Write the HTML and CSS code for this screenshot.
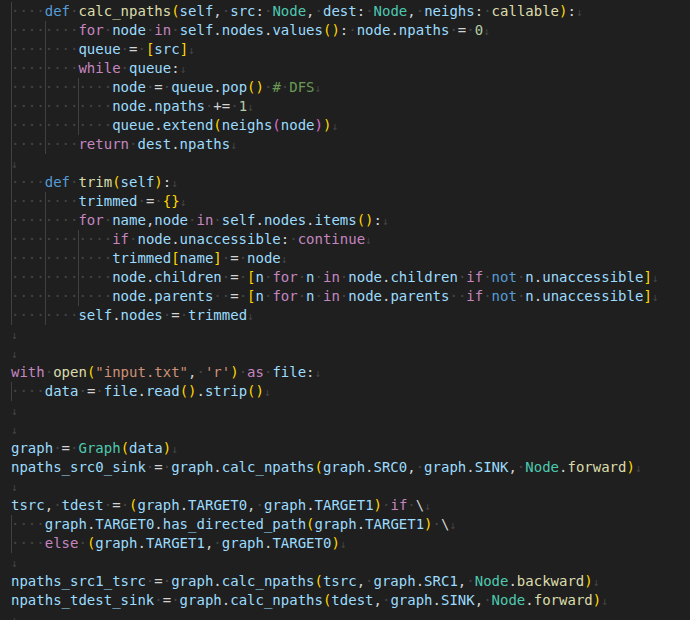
FILE: index.html
```html
<!DOCTYPE html>
<html>
<head>
<meta charset="utf-8">
<link rel="stylesheet" href="styles.css">
</head>
<body>
<div class="editor">
<div class="line"><span class="ind w">····</span><span class="d">def</span><span class="w">·</span><span class="f">calc_npaths</span><span class="b1">(</span><span class="v">self</span>,<span class="w">·</span><span class="v">src</span>:<span class="w">·</span><span class="c">Node</span>,<span class="w">·</span><span class="v">dest</span>:<span class="w">·</span><span class="c">Node</span>,<span class="w">·</span><span class="v">neighs</span>:<span class="w">·</span><span class="f">callable</span><span class="b1">)</span>:<span class="nl">↓</span></div>
<div class="line"><span class="ind w">····</span><span class="ind w">····</span><span class="k">for</span><span class="w">·</span><span class="v">node</span><span class="w">·</span><span class="k">in</span><span class="w">·</span><span class="v">self</span>.<span class="v">nodes</span>.<span class="v">values</span><span class="b1">()</span>:<span class="w">·</span><span class="v">node</span>.<span class="v">npaths</span><span class="w">·</span>=<span class="w">·</span><span class="n">0</span><span class="nl">↓</span></div>
<div class="line"><span class="ind w">····</span><span class="ind w">····</span><span class="v">queue</span><span class="w">·</span>=<span class="w">·</span><span class="b1">[</span><span class="v">src</span><span class="b1">]</span><span class="nl">↓</span></div>
<div class="line"><span class="ind w">····</span><span class="ind w">····</span><span class="k">while</span><span class="w">·</span><span class="v">queue</span>:<span class="nl">↓</span></div>
<div class="line"><span class="ind w">····</span><span class="ind w">····</span><span class="ind w">····</span><span class="v">node</span><span class="w">·</span>=<span class="w">·</span><span class="v">queue</span>.<span class="v">pop</span><span class="b1">()</span><span class="w">·</span><span class="cm">#</span><span class="w">·</span><span class="cm">DFS</span><span class="nl">↓</span></div>
<div class="line"><span class="ind w">····</span><span class="ind w">····</span><span class="ind w">····</span><span class="v">node</span>.<span class="v">npaths</span><span class="w">·</span>+=<span class="w">·</span><span class="n">1</span><span class="nl">↓</span></div>
<div class="line"><span class="ind w">····</span><span class="ind w">····</span><span class="ind w">····</span><span class="v">queue</span>.<span class="v">extend</span><span class="b1">(</span><span class="v">neighs</span><span class="b2">(</span><span class="v">node</span><span class="b2">)</span><span class="b1">)</span><span class="nl">↓</span></div>
<div class="line"><span class="ind w">····</span><span class="ind w">····</span><span class="k">return</span><span class="w">·</span><span class="v">dest</span>.<span class="v">npaths</span><span class="nl">↓</span></div>
<div class="line"><span class="ind e"></span><span class="nl">↓</span></div>
<div class="line"><span class="ind w">····</span><span class="d">def</span><span class="w">·</span><span class="f">trim</span><span class="b1">(</span><span class="v">self</span><span class="b1">)</span>:<span class="nl">↓</span></div>
<div class="line"><span class="ind w">····</span><span class="ind w">····</span><span class="v">trimmed</span><span class="w">·</span>=<span class="w">·</span><span class="b1">{}</span><span class="nl">↓</span></div>
<div class="line"><span class="ind w">····</span><span class="ind w">····</span><span class="k">for</span><span class="w">·</span><span class="v">name</span>,<span class="v">node</span><span class="w">·</span><span class="k">in</span><span class="w">·</span><span class="v">self</span>.<span class="v">nodes</span>.<span class="v">items</span><span class="b1">()</span>:<span class="nl">↓</span></div>
<div class="line"><span class="ind w">····</span><span class="ind w">····</span><span class="ind w">····</span><span class="k">if</span><span class="w">·</span><span class="v">node</span>.<span class="v">unaccessible</span>:<span class="w">·</span><span class="k">continue</span><span class="nl">↓</span></div>
<div class="line"><span class="ind w">····</span><span class="ind w">····</span><span class="ind w">····</span><span class="v">trimmed</span><span class="b1">[</span><span class="v">name</span><span class="b1">]</span><span class="w">·</span>=<span class="w">·</span><span class="v">node</span><span class="nl">↓</span></div>
<div class="line"><span class="ind w">····</span><span class="ind w">····</span><span class="ind w">····</span><span class="v">node</span>.<span class="v">children</span><span class="w">·</span>=<span class="w">·</span><span class="b1">[</span><span class="v">n</span><span class="w">·</span><span class="k">for</span><span class="w">·</span><span class="v">n</span><span class="w">·</span><span class="k">in</span><span class="w">·</span><span class="v">node</span>.<span class="v">children</span><span class="w">·</span><span class="k">if</span><span class="w">·</span><span class="d">not</span><span class="w">·</span><span class="v">n</span>.<span class="v">unaccessible</span><span class="b1">]</span><span class="nl">↓</span></div>
<div class="line"><span class="ind w">····</span><span class="ind w">····</span><span class="ind w">····</span><span class="v">node</span>.<span class="v">parents</span><span class="w">··</span>=<span class="w">·</span><span class="b1">[</span><span class="v">n</span><span class="w">·</span><span class="k">for</span><span class="w">·</span><span class="v">n</span><span class="w">·</span><span class="k">in</span><span class="w">·</span><span class="v">node</span>.<span class="v">parents</span><span class="w">··</span><span class="k">if</span><span class="w">·</span><span class="d">not</span><span class="w">·</span><span class="v">n</span>.<span class="v">unaccessible</span><span class="b1">]</span><span class="nl">↓</span></div>
<div class="line"><span class="ind w">····</span><span class="ind w">····</span><span class="v">self</span>.<span class="v">nodes</span><span class="w">·</span>=<span class="w">·</span><span class="v">trimmed</span><span class="nl">↓</span></div>
<div class="line"><span class="nl">↓</span></div>
<div class="line"><span class="nl">↓</span></div>
<div class="line"><span class="k">with</span><span class="w">·</span><span class="f">open</span><span class="b1">(</span><span class="s">"input.txt"</span>,<span class="w">·</span><span class="s">'r'</span><span class="b1">)</span><span class="w">·</span><span class="k">as</span><span class="w">·</span><span class="v">file</span>:<span class="nl">↓</span></div>
<div class="line"><span class="ind w">····</span><span class="v">data</span><span class="w">·</span>=<span class="w">·</span><span class="v">file</span>.<span class="v">read</span><span class="b1">()</span>.<span class="v">strip</span><span class="b1">()</span><span class="nl">↓</span></div>
<div class="line"><span class="nl">↓</span></div>
<div class="line"><span class="nl">↓</span></div>
<div class="line"><span class="v">graph</span><span class="w">·</span>=<span class="w">·</span><span class="c">Graph</span><span class="b1">(</span><span class="v">data</span><span class="b1">)</span><span class="nl">↓</span></div>
<div class="line"><span class="v">npaths_src0_sink</span><span class="w">·</span>=<span class="w">·</span><span class="v">graph</span>.<span class="v">calc_npaths</span><span class="b1">(</span><span class="v">graph</span>.<span class="v">SRC0</span>,<span class="w">·</span><span class="v">graph</span>.<span class="v">SINK</span>,<span class="w">·</span><span class="c">Node</span>.<span class="f">forward</span><span class="b1">)</span><span class="nl">↓</span></div>
<div class="line"><span class="nl">↓</span></div>
<div class="line"><span class="v">tsrc</span>,<span class="w">·</span><span class="v">tdest</span><span class="w">·</span>=<span class="w">·</span><span class="b1">(</span><span class="v">graph</span>.<span class="v">TARGET0</span>,<span class="w">·</span><span class="v">graph</span>.<span class="v">TARGET1</span><span class="b1">)</span><span class="w">·</span><span class="k">if</span><span class="w">·</span>\<span class="nl">↓</span></div>
<div class="line"><span class="ind w">····</span><span class="v">graph</span>.<span class="v">TARGET0</span>.<span class="v">has_directed_path</span><span class="b1">(</span><span class="v">graph</span>.<span class="v">TARGET1</span><span class="b1">)</span><span class="w">·</span>\<span class="nl">↓</span></div>
<div class="line"><span class="ind w">····</span><span class="k">else</span><span class="w">·</span><span class="b1">(</span><span class="v">graph</span>.<span class="v">TARGET1</span>,<span class="w">·</span><span class="v">graph</span>.<span class="v">TARGET0</span><span class="b1">)</span><span class="nl">↓</span></div>
<div class="line"><span class="nl">↓</span></div>
<div class="line"><span class="v">npaths_src1_tsrc</span><span class="w">·</span>=<span class="w">·</span><span class="v">graph</span>.<span class="v">calc_npaths</span><span class="b1">(</span><span class="v">tsrc</span>,<span class="w">·</span><span class="v">graph</span>.<span class="v">SRC1</span>,<span class="w">·</span><span class="c">Node</span>.<span class="f">backward</span><span class="b1">)</span><span class="nl">↓</span></div>
<div class="line"><span class="v">npaths_tdest_sink</span><span class="w">·</span>=<span class="w">·</span><span class="v">graph</span>.<span class="v">calc_npaths</span><span class="b1">(</span><span class="v">tdest</span>,<span class="w">·</span><span class="v">graph</span>.<span class="v">SINK</span>,<span class="w">·</span><span class="c">Node</span>.<span class="f">forward</span><span class="b1">)</span><span class="nl">↓</span></div>
<div class="line"><span class="nl">↓</span></div>
</div>
</body>
</html>
```
FILE: styles.css
```css
html, body {
  margin: 0;
  padding: 0;
  background: #1f1f1f;
  overflow: hidden;
}
.editor {
  padding: 2px 0 0 11px;
  font-family: "DejaVu Sans Mono", "Liberation Mono", monospace;
  font-size: 14px;
  line-height: 19px;
  color: #d4d4d4;
}
.line {
  height: 19px;
  white-space: pre;
}
.ind {
  display: inline-block;
  height: 19px;
  vertical-align: top;
  background: linear-gradient(#404040, #404040) no-repeat left top / 1px 100%;
}
.ind.e {
  width: 1px;
  margin-right: -1px;
}
.w { color: #454545; }
.nl { color: #454545; font-size: 11px; }
.k { color: #c586c0; }
.d { color: #569cd6; }
.f { color: #dcdcaa; }
.v { color: #9cdcfe; }
.c { color: #4ec9b0; }
.n { color: #b5cea8; }
.s { color: #ce9178; }
.cm { color: #6a9955; }
.b1 { color: #ffd700; }
.b2 { color: #da70d6; }
```
